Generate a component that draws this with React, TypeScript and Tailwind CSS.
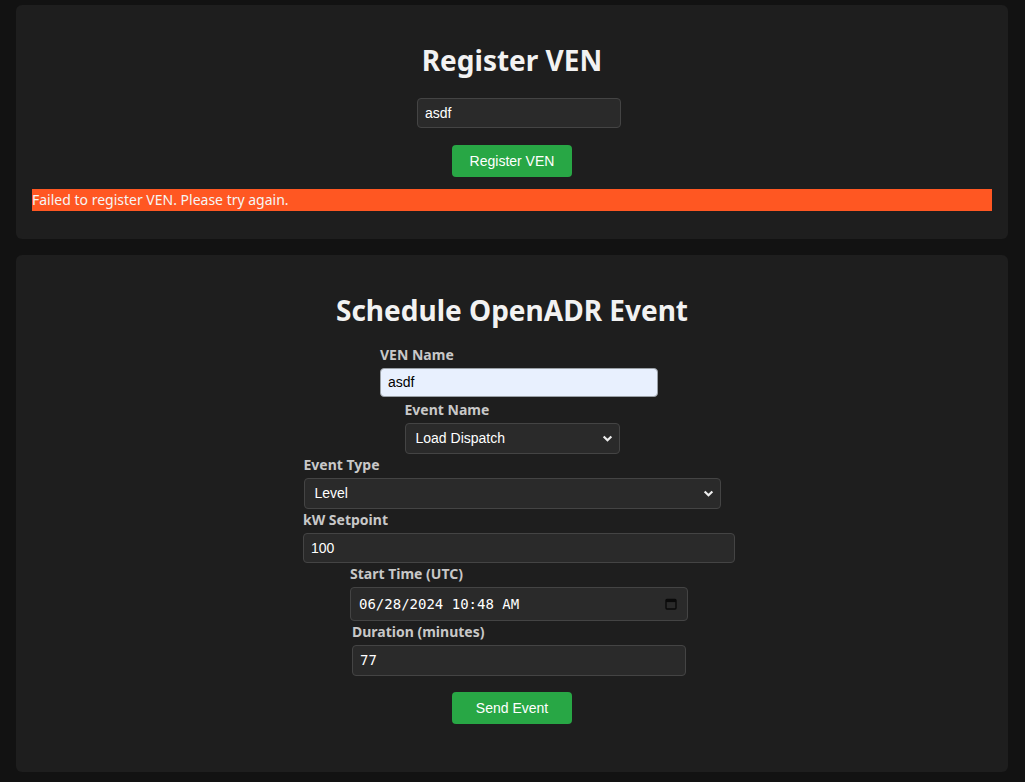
import React from 'react'

const SANS = "font-['Noto_Sans','Open_Sans',sans-serif]"

function Chevron() {
  return (
    <svg width="11" height="11" viewBox="0 0 10 10" className="shrink-0">
      <path d="M1.5 3.2 L5 6.6 L8.5 3.2" fill="none" stroke="#ededed" strokeWidth="2" />
    </svg>
  )
}

function CalendarIcon() {
  return (
    <svg width="12" height="12" viewBox="0 0 12 12" className="shrink-0">
      <rect x="1" y="1.5" width="10" height="9.5" rx="1" fill="none" stroke="#0a0a0a" strokeWidth="1.4" />
      <rect x="1" y="1.5" width="10" height="2.6" fill="#0a0a0a" />
    </svg>
  )
}

function Label({ children }: { children: React.ReactNode }) {
  return <div className={`${SANS} text-[14px] font-bold leading-[19px] text-[#c8c8c8] mb-[4px]`}>{children}</div>
}

export default function App() {
  return (
    <div className="min-h-[782px] bg-[#121212] pl-4 pr-[17px] pt-[5px] pb-4 flex flex-col gap-4">
      {/* Register VEN */}
      <div className="bg-[#1e1e1e] rounded-md px-4 pt-[37px] pb-[28px] flex flex-col items-center">
        <h2 className={`${SANS} text-[28px] font-bold leading-[36px] text-[#f2f2f2]`}>Register VEN</h2>
        <div className="mt-[20px] ml-[14px] w-[204px] h-[30px] bg-[#2a2a2a] border border-[#444] rounded px-[7px] flex items-center font-['Liberation_Sans',Arial,sans-serif] text-[14px] text-white">
          asdf
        </div>
        <button className="mt-[17px] w-[120px] h-[32px] bg-[#28a745] rounded font-['Liberation_Sans',Arial,sans-serif] text-[14px] text-white">
          Register VEN
        </button>
        <div className={`mt-[12px] self-stretch h-[22px] bg-[#ff5722] ${SANS} text-[14px] leading-[22px] text-[#f5f5f5]`}>
          Failed to register VEN. Please try again.
        </div>
      </div>

      {/* Schedule event */}
      <div className="bg-[#1e1e1e] rounded-md px-4 pt-[37px] pb-[48px] flex flex-col items-center">
        <h2 className={`${SANS} text-[28px] font-bold leading-[36px] text-[#f2f2f2]`}>Schedule OpenADR Event</h2>

        <div className="mt-[17px] w-[278px] ml-[14px]">
          <Label>VEN Name</Label>
          <div className="h-[29px] bg-[#e8f0fe] border border-[#9aa0a6] rounded px-[7px] flex items-center font-['Liberation_Sans',Arial,sans-serif] text-[14px] text-black">
            asdf
          </div>
        </div>

        <div className="mt-[3px] w-[215px]">
          <Label>Event Name</Label>
          <div className="h-[31px] bg-[#2a2a2a] border border-[#444] rounded pl-[10px] pr-[6px] flex items-center justify-between font-['Liberation_Sans',Arial,sans-serif] text-[14px] text-white">
            <span>Load Dispatch</span>
            <Chevron />
          </div>
        </div>

        <div className="mt-[1px] w-[417px]">
          <Label>Event Type</Label>
          <div className="h-[31px] bg-[#2a2a2a] border border-[#444] rounded pl-[10px] pr-[6px] flex items-center justify-between font-['Liberation_Sans',Arial,sans-serif] text-[14px] text-white">
            <span>Level</span>
            <Chevron />
          </div>
        </div>

        <div className="mt-[1px] w-[432px] ml-[14px]">
          <Label>kW Setpoint</Label>
          <div className="h-[30px] bg-[#2a2a2a] border border-[#444] rounded px-[7px] flex items-center font-['Liberation_Sans',Arial,sans-serif] text-[14px] text-white">
            100
          </div>
        </div>

        <div className="mt-[1px] w-[338px] ml-[14px]">
          <Label>Start Time (UTC)</Label>
          <div className="h-[34px] bg-[#2a2a2a] border border-[#444] rounded pl-[8px] pr-[10px] flex items-center justify-between font-['DejaVu_Sans_Mono',monospace] text-[14px] text-white">
            <span>06/28/2024 10:48 AM</span>
            <CalendarIcon />
          </div>
        </div>

        <div className="mt-[1px] w-[334px] ml-[14px]">
          <Label>Duration (minutes)</Label>
          <div className="h-[31px] bg-[#2a2a2a] border border-[#444] rounded px-[7px] flex items-center font-['DejaVu_Sans_Mono',monospace] text-[14px] text-white">
            77
          </div>
        </div>

        <button className="mt-[16px] w-[120px] h-[32px] bg-[#28a745] rounded font-['Liberation_Sans',Arial,sans-serif] text-[14px] text-white">
          Send Event
        </button>
      </div>
    </div>
  )
}
